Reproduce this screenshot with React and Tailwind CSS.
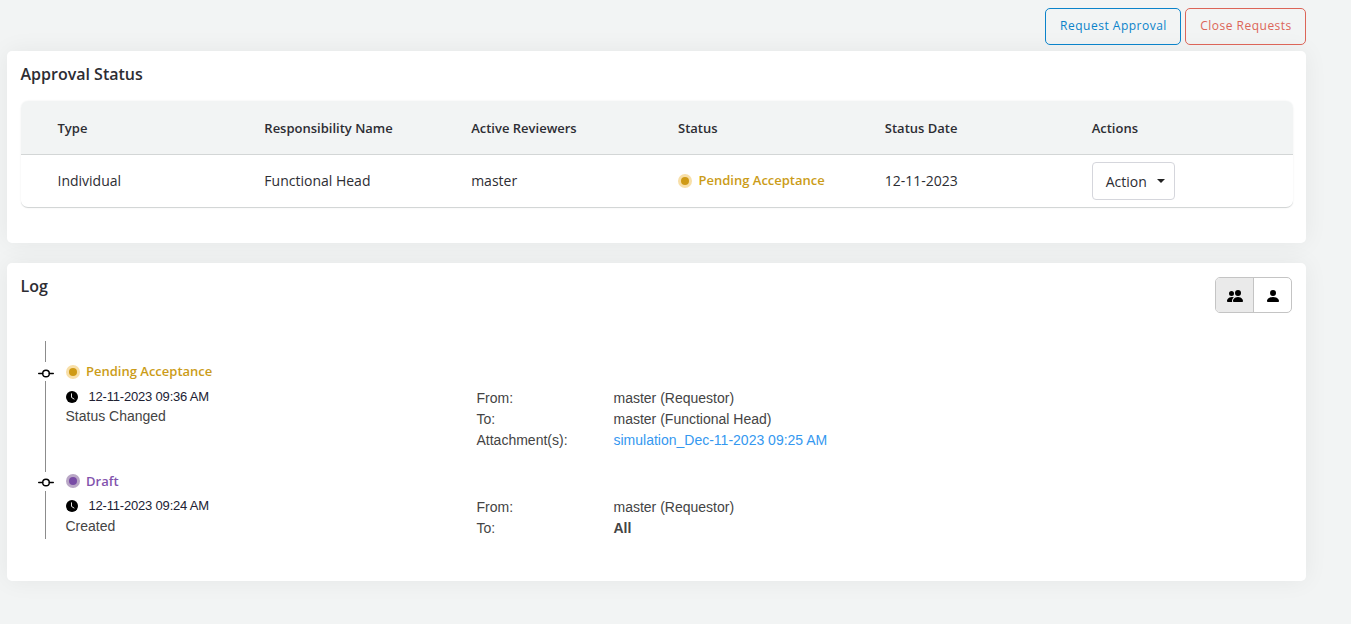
import React from "react";
import { BsPeopleFill, BsPersonFill } from "react-icons/bs";

const columns = ["Type", "Responsibility Name", "Active Reviewers", "Status", "Status Date", "Actions"];

const entries = [
  {
    status: "Pending Acceptance",
    tone: "amber",
    time: "12-11-2023 09:36 AM",
    event: "Status Changed",
    height: "h-[110px]",
    iconY: 11.5,
    dotSpacing: "mb-0",
    timeSpacing: "mt-[5px]",
    eventSpacing: "-mt-px",
    detailSpacing: "pt-[26px]",
    details: [
      { label: "From:", value: "master (Requestor)" },
      { label: "To:", value: "master (Functional Head)" },
      { label: "Attachment(s):", value: "simulation_Dec-11-2023 09:25 AM", style: "text-[#3598f0]" },
    ],
  },
  {
    status: "Draft",
    tone: "purple",
    time: "12-11-2023 09:24 AM",
    event: "Created",
    height: "h-[67px]",
    iconY: 10.5,
    dotSpacing: "mb-0.5",
    timeSpacing: "mt-1",
    eventSpacing: "mt-0",
    detailSpacing: "pt-[25px]",
    details: [
      { label: "From:", value: "master (Requestor)" },
      { label: "To:", value: "All", style: "font-bold" },
    ],
  },
];

const tones = {
  amber: { text: "text-[#cb9c18]", ring: "bg-[#f8dfa8]", dot: "bg-[#cf9a15]" },
  purple: { text: "text-[#8353ad]", ring: "bg-[#b9a7c6]", dot: "bg-[#784ba5]" },
};

function Status({ tone, dotClass = "mb-0", textClass = "pb-0", children }) {
  const t = tones[tone];
  return (
    <div className={`flex h-5 items-center gap-[6.5px] text-[13px] font-semibold ${t.text}`}>
      <span className={`flex size-[14px] items-center justify-center rounded-full ${t.ring} ${dotClass}`}>
        <span className={`size-2 rounded-full ${t.dot}`} />
      </span>
      <span className={textClass}>{children}</span>
    </div>
  );
}

function CommitIcon({ y }) {
  return (
    <svg width="16" height="19" viewBox="0 0 16 19" fill="none" stroke="#000" strokeWidth="1.4" className="shrink-0">
      <circle cx="8" cy={y} r="3.3" />
      <path d={`M0.7 ${y}H4.7M11.3 ${y}H15.3`} strokeLinecap="round" />
    </svg>
  );
}

function ClockIcon() {
  return (
    <svg width="12" height="12" viewBox="0 0 12 12">
      <circle cx="6" cy="6" r="6" fill="#000" />
      <path d="M5.5 2.8V6.4L8 8" fill="none" stroke="#fff" strokeWidth="0.9" strokeLinecap="round" />
    </svg>
  );
}

function LogEntry({ entry }) {
  return (
    <div className={`flex ${entry.height}`}>
      <div className="flex w-4 flex-col items-center">
        <CommitIcon y={entry.iconY} />
        <div className="mr-px w-px flex-1 bg-[#8c8c8c]" />
      </div>
      <div className="ml-[11.5px] w-[411px]">
        <Status tone={entry.tone} dotClass={entry.dotSpacing}>{entry.status}</Status>
        <div className={`flex h-5 items-center gap-[11px] text-[13px] tracking-[-0.19px] text-[#212133] font-['Liberation_Sans',Arial,sans-serif] ${entry.timeSpacing}`}>
          <ClockIcon />
          {entry.time}
        </div>
        <div className={`text-sm leading-5 text-[#444] font-['Liberation_Sans',Arial,sans-serif] ${entry.eventSpacing}`}>{entry.event}</div>
      </div>
      <dl className={`text-sm leading-[21px] text-[#444] font-['Liberation_Sans',Arial,sans-serif] ${entry.detailSpacing}`}>
        {entry.details.map((d) => (
          <div key={d.label} className="flex">
            <dt className="w-[137px]">{d.label}</dt>
            <dd className={d.style}>{d.value}</dd>
          </div>
        ))}
      </dl>
    </div>
  );
}

export default function App() {
  return (
    <div className="h-[624px] overflow-hidden bg-[#f2f4f4] pl-[7px] pr-[45px] pt-2 text-[#2d2d33] font-['Open_Sans','Noto_Sans',sans-serif]">
      <div className="flex h-[43px] items-start justify-end gap-1 text-xs tracking-[0.5px]">
        <button className="h-[37px] w-[136px] rounded-[5px] border border-[#0b83ca] pb-0.5 pl-px text-[#0b83ca]">Request Approval</button>
        <button className="h-[37px] w-[121px] rounded-[5px] border border-[#dc6558] pb-0.5 pl-px text-[#dc6558]">Close Requests</button>
      </div>

      <section className="h-48 rounded-[5px] bg-white px-[13.5px] pt-3 shadow-[0_0_25px_rgba(0,0,0,0.06)]">
        <h2 className="text-base font-semibold leading-[22px]">Approval Status</h2>
        <div className="mt-4 h-[107px] overflow-hidden rounded-[7px] border-b border-[#d3d6d6] shadow-[0_0_2px_rgba(0,0,0,0.08)]">
          <div className="grid h-[54px] grid-cols-6 items-center border-b border-[#d3d6d6] bg-[#f2f4f4] px-[15.5px] pt-0.5 text-[13px] font-semibold">
            {columns.map((c) => (
              <div key={c} className="pl-[21.5px]">{c}</div>
            ))}
          </div>
          <div className="grid h-[52px] grid-cols-6 items-center px-[15.5px] text-sm">
            <div className="pl-[21.5px]">Individual</div>
            <div className="pl-[21.5px]">Functional Head</div>
            <div className="pl-[21.5px]">master</div>
            <div className="pl-[21.5px]"><Status tone="amber" textClass="pb-0.5">Pending Acceptance</Status></div>
            <div className="pl-[21.5px]">12-11-2023</div>
            <div className="pl-[21.5px]">
              <button className="flex h-[38px] w-[83px] items-center gap-[10px] rounded-[4px] border border-[#d5d6dc] bg-white pl-[13px] pt-0.5">
                Action
                <span className="mb-0.5 border-x-4 border-t-4 border-x-transparent border-t-[#222]" />
              </button>
            </div>
          </div>
        </div>
      </section>

      <section className="mt-5 h-[318px] rounded-[5px] bg-white pl-[13.5px] pr-[14px] pt-3 shadow-[0_0_25px_rgba(0,0,0,0.06)]">
        <div className="flex h-[66px] justify-between">
          <h2 className="text-base font-semibold leading-[22px]">Log</h2>
          <div className="mt-0.5 flex h-9 w-[77px] overflow-hidden rounded-[5px] border border-[#c4c4c4] text-black">
            <button className="flex w-[38px] items-center justify-center border-r border-[#c4c4c4] bg-[#eaeaea] pl-px pt-0.5"><BsPeopleFill size={16} /></button>
            <button className="flex flex-1 items-center justify-center pt-0.5"><BsPersonFill size={16} /></button>
          </div>
        </div>
        <div className="pl-[17.5px]">
          <div className="ml-[7px] h-[21px] w-px bg-[#8c8c8c]" />
          {entries.map((e) => (
            <LogEntry key={e.time} entry={e} />
          ))}
        </div>
      </section>
    </div>
  );
}
